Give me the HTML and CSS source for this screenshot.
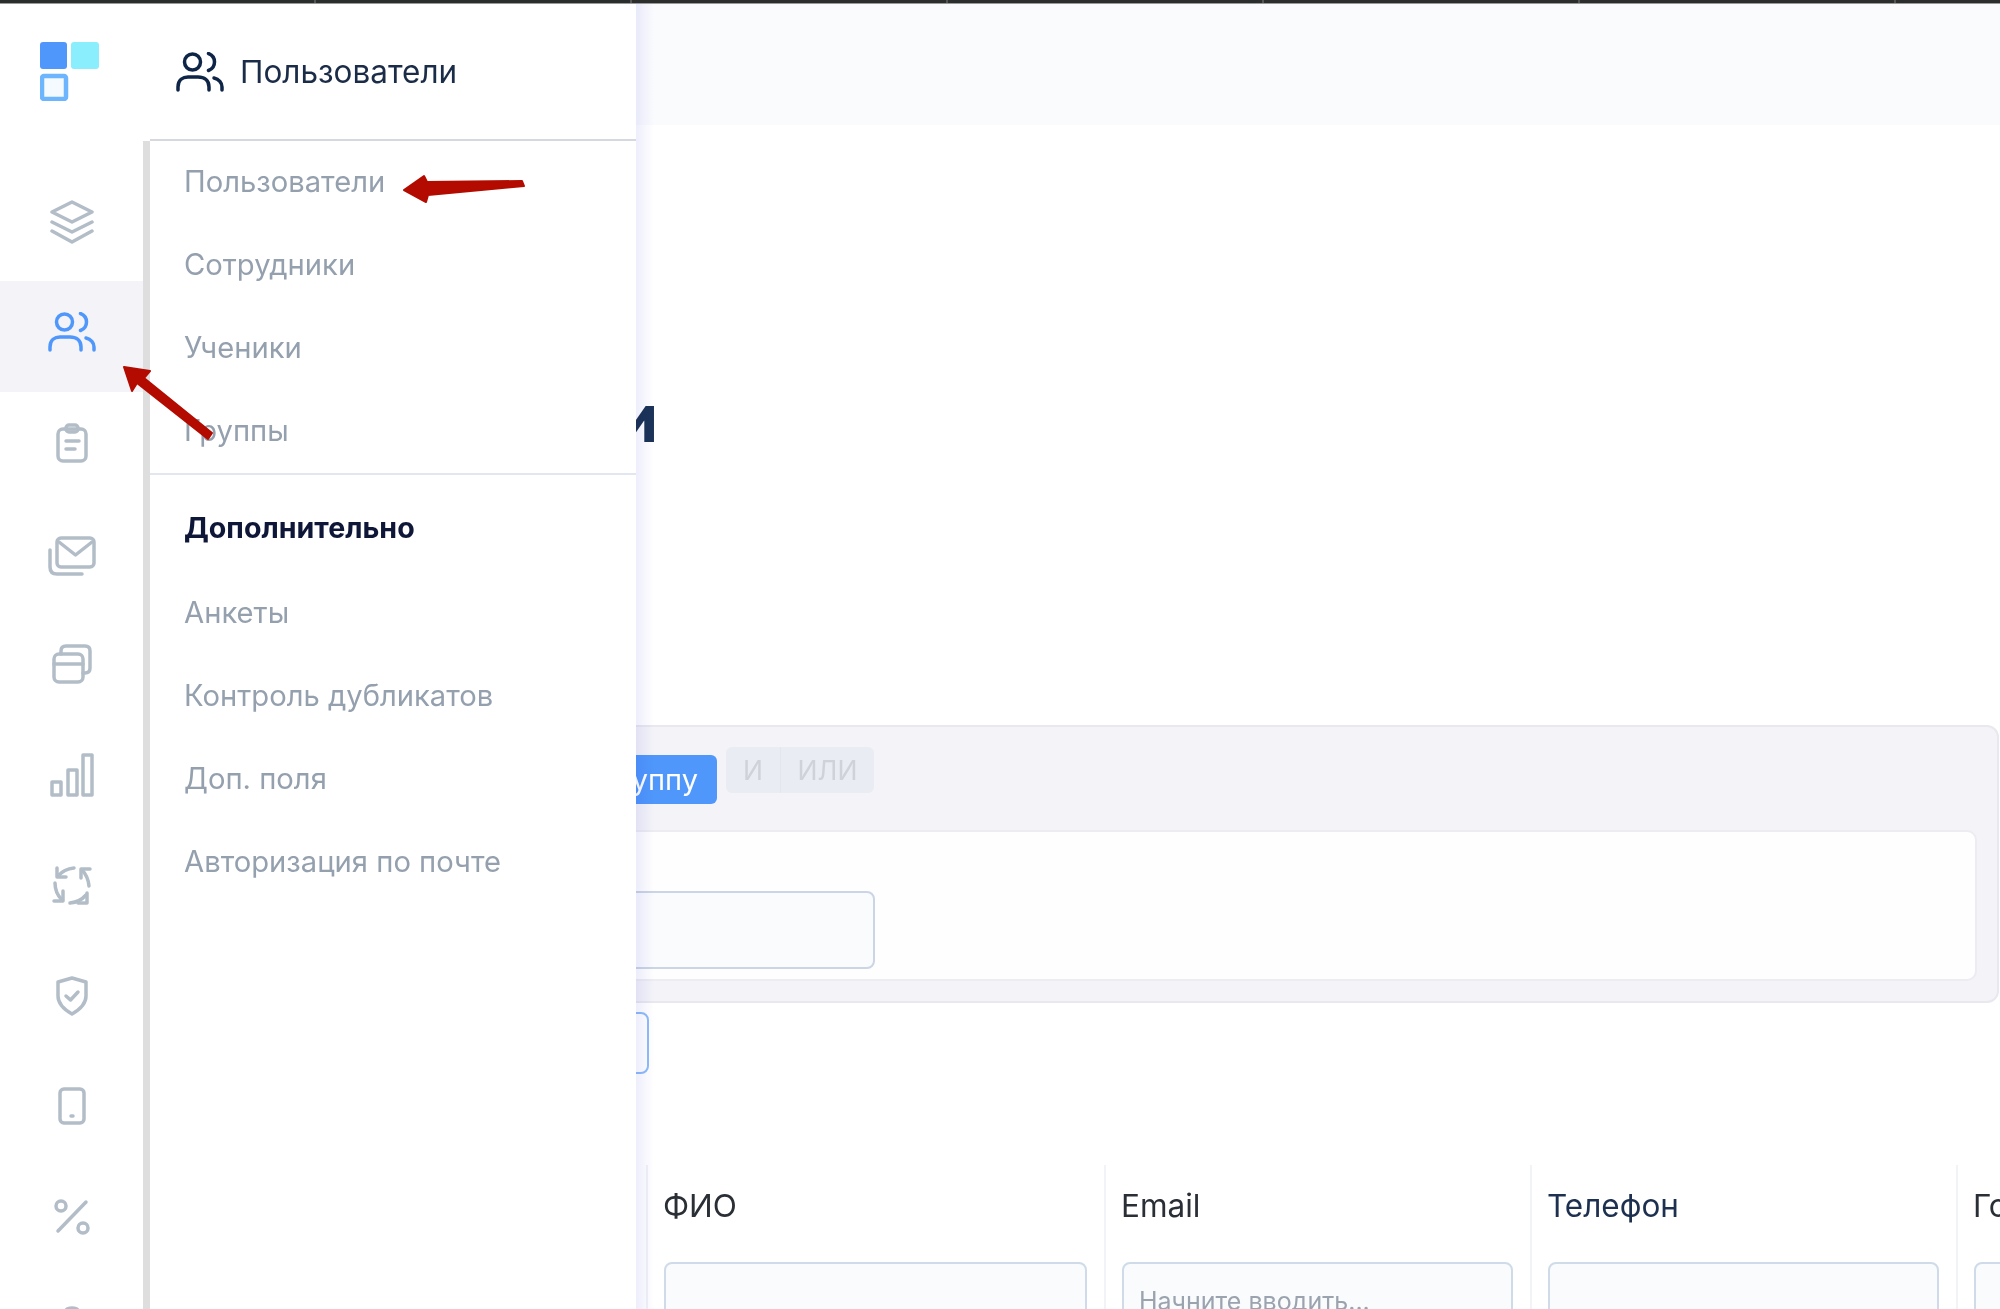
FILE: index.html
```html
<!DOCTYPE html>
<html lang="ru">
  <head>
    <meta charset="UTF-8" />
    <title>Пользователи</title>
    <link rel="stylesheet" href="styles.css">
  </head>
  <body>
    <div class="topBar"></div>
    <div class="app">
      <main class="main">
        <div class="pageBar"></div>
        <div class="content">
          <h1 class="pageTitle">Пользователи</h1>

          <section class="filterGroup">
            <div class="groupHead">
              <button class="addGroup">Добавить группу</button>
              <div class="logicSwitch">
                <span class="logicAnd">И</span>
                <span class="logicOr">ИЛИ</span>
              </div>
            </div>
            <div class="groupBody">
              <div class="conditionInput"></div>
            </div>
          </section>
          <div class="applyButton"></div>

          <div class="tableHead">
            <div class="headCell"></div>
            <div class="headCell">
              <div class="headLabel">ФИО</div>
              <input class="headInput" type="text" />
            </div>
            <div class="headCell">
              <div class="headLabel">Email</div>
              <input class="headInput" type="text" placeholder="Начните вводить..." />
            </div>
            <div class="headCell">
              <div class="headLabel headLabelBlue">Телефон</div>
              <input class="headInput" type="text" />
            </div>
            <div class="headCell">
              <div class="headLabel">Город</div>
              <input class="headInput" type="text" />
            </div>
          </div>
        </div>
      </main>

      <div class="side">
        <nav class="rail">
          <div class="railLogo">
            <svg width="59" height="59" viewBox="0 0 59 59">
              <rect x="0" y="0" width="27" height="27" rx="3" fill="#4f97fb" />
              <rect x="31" y="0" width="28" height="27" rx="3" fill="#8beefc" />
              <rect x="2" y="34" width="24" height="23" rx="2" fill="#f4faff" stroke="#6db5fc" stroke-width="4.5" />
            </svg>
          </div>
          <a class="railItem">
            <svg class="icon" width="44" height="44" viewBox="0 0 44 44"><path d="M22 2 L42 12 L22 22 L2 12 Z" /><path d="M2 22 L22 32 L42 22" /><path d="M2 31 L22 42 L42 31" /></svg>
          </a>
          <a class="railItem railItemActive">
            <svg class="icon" width="48" height="40" viewBox="0 0 48 40"><circle cx="16.5" cy="10" r="8" /><path d="M32.5 1.5 C36.5 3 38.5 6 38.5 10 C38.5 14 36.5 17 32.5 18.5" /><path d="M2 38 V35 C2 28 7 25 12 25 H22 C28 25 33 28 33 35 V38" /><path d="M38 26 C43 27 46 31 46 35 V38" /></svg>
          </a>
          <a class="railItem">
            <svg class="icon" width="32" height="40" viewBox="0 0 32 40"><rect x="2" y="6" width="28" height="32" rx="5" /><rect x="10" y="2" width="12" height="7" rx="3" /><path d="M10 18 H23" /><path d="M10 26 H19" /></svg>
          </a>
          <a class="railItem">
            <svg class="icon iconLow" width="48" height="40" viewBox="0 0 48 40"><rect x="9" y="2" width="37" height="29" rx="4" /><path d="M11 6 L27.500 19 L44 6" /><path d="M2 14 V31 Q2 38 9 38 H34" /></svg>
          </a>
          <a class="railItem">
            <svg class="icon" width="40" height="40" viewBox="0 0 40 40"><rect x="2" y="10" width="29" height="28" rx="5" /><path d="M2 20 H31" /><path d="M9 10 V7 Q9 2 14 2 H33 Q38 2 38 7 V24 Q38 29 33 29 H31" /></svg>
          </a>
          <a class="railItem">
            <svg class="icon" width="44" height="44" viewBox="0 0 44 44"><rect x="2" y="29" width="9" height="13" /><rect x="18" y="17" width="9" height="25" /><rect x="33" y="2" width="9" height="40" /></svg>
          </a>
          <a class="railItem">
            <svg class="icon" width="40" height="40" viewBox="0 0 40 40"><path d="M22 3 Q12 4 6 11" /><path d="M5 3 V12 H14" /><path d="M37 21 Q36 11 30 5" /><path d="M38 4 H29 V13" /><path d="M18 38 Q28 37 34 30" /><path d="M35 28 V38 H26" /><path d="M3 18 Q3 28 10 35" /><path d="M2 36 H11 V26" /></svg>
          </a>
          <a class="railItem">
            <svg class="icon" width="32" height="40" viewBox="0 0 32 40"><path d="M16 2 L30 6 V20 C30 29 23 34 16 38 C9 34 2 29 2 20 V6 Z" /><path d="M10 20 L14.500 24 L22 16" /></svg>
          </a>
          <a class="railItem">
            <svg class="icon" width="28" height="38" viewBox="0 0 28 38"><rect x="2" y="2" width="24" height="34" rx="4" /><path d="M13 29 H15" /></svg>
          </a>
          <a class="railItem">
            <svg class="icon" width="36" height="36" viewBox="0 0 36 36"><circle cx="7" cy="7" r="5" /><circle cx="29" cy="29" r="5" /><path d="M32 3 L4 32" /></svg>
          </a>
          <a class="railItem">
            <svg class="icon" width="44" height="44" viewBox="0 0 44 44"><path d="M15 8 Q15 2 22 2 Q29 2 29 8" /><path d="M5 9 L10 8" /><path d="M34 8 L39 9" /><circle cx="22" cy="22" r="7" /></svg>
          </a>
        </nav>

        <aside class="flyout">
          <div class="flyoutHead">
            <svg class="flyoutIcon" width="48" height="40" viewBox="0 0 48 40"><circle cx="16.5" cy="10" r="8" /><path d="M32.5 1.5 C36.5 3 38.5 6 38.5 10 C38.5 14 36.5 17 32.5 18.5" /><path d="M2 38 V35 C2 28 7 25 12 25 H22 C28 25 33 28 33 35 V38" /><path d="M38 26 C43 27 46 31 46 35 V38" /></svg>
            <span class="flyoutTitle">Пользователи</span>
          </div>
          <div class="flyoutBody">
            <div class="menuGroup">
              <a class="menuItem">Пользователи</a>
              <a class="menuItem">Сотрудники</a>
              <a class="menuItem">Ученики</a>
              <a class="menuItem">Группы</a>
            </div>
            <div class="menuGroup">
              <div class="menuHeading">Дополнительно</div>
              <a class="menuItem">Анкеты</a>
              <a class="menuItem">Контроль дубликатов</a>
              <a class="menuItem">Доп. поля</a>
              <a class="menuItem">Авторизация по почте</a>
            </div>
          </div>
        </aside>
      </div>

      <!-- red arrows drawn over the screen -->
      <svg class="marks" width="560" height="460" viewBox="0 4 560 460">
        <path d="M404 190 L424 176 L427 182 L522 181 L524 186 L428 195 L426 202 Z" />
        <path d="M124 367 L150 371 L144 378 L212 433 L208 439 L137 383 L132 391 Z" />
      </svg>
    </div>
  </body>
</html>
```

FILE: styles.css
```css
html,
body {
  height: 100%;
}

body {
  margin: 0;
  display: flex;
  flex-direction: column;
  overflow: hidden;
  background-color: #fff;
  color: #20304a;
  font-family: Inter, 'Noto Sans', sans-serif;
}

.topBar {
  height: 4px;
  flex-shrink: 0;
  background: repeating-linear-gradient(90deg, #2a2e2d 0, #2a2e2d 314px, #555 314px, #555 316px);
  border-bottom: 1px solid #9a9a9a;
  box-sizing: border-box;
}

.app {
  position: relative;
  flex: 1;
  overflow: hidden;
  filter: blur(0.7px);
}

/* main page, mostly covered by the side menu */
.pageBar {
  height: 121px;
  background-color: #fafbfd;
}

.content {
  padding: 0 1px 0 172px;
}

.pageTitle {
  margin: 253px 0 0 14px;
  font-size: 66px;
  font-weight: 700;
  line-height: 80px;
  color: #1b3358;
}

.filterGroup {
  margin-top: 267px;
  padding: 20px;
  background-color: #f3f3f8;
  border: 2px solid #e8e8ef;
  border-radius: 12px;
}

.groupHead {
  display: flex;
  align-items: flex-start;
  gap: 9px;
}

.addGroup {
  width: 281px;
  height: 49px;
  margin: 8px 0 0 242px;
  padding: 0 19px 0 0;
  border: none;
  border-radius: 6px;
  background-color: #4f97fb;
  color: #fff;
  font-family: inherit;
  font-size: 29px;
  text-align: right;
}

.logicSwitch {
  display: flex;
  height: 46px;
  border-radius: 6px;
  background-color: #e9ecf3;
  color: #cfd2d9;
  font-size: 26.5px;
  line-height: 46px;
  text-align: center;
}

.logicAnd {
  width: 54px;
  border-right: 1px solid #e3e6ee;
}

.logicOr {
  width: 93px;
}

.groupBody {
  height: 151px;
  margin-top: 26px;
  padding: 59px 0 0 79px;
  box-sizing: border-box;
  background-color: #fefefe;
  border: 2px solid #ececf2;
  border-radius: 10px;
}

.conditionInput {
  width: 600px;
  height: 78px;
  box-sizing: border-box;
  background-color: #fafbfd;
  border: 2px solid #cbd5e5;
  border-radius: 8px;
}

.applyButton {
  width: 477px;
  height: 62px;
  margin-top: 9px;
  box-sizing: border-box;
  background-color: #fff;
  border: 2px solid #8fbcf9;
  border-radius: 8px;
}

.tableHead {
  display: grid;
  grid-template-columns: 474px 458px 426px 426px 1fr;
  margin-top: 91px;
}

.headCell {
  padding: 24px 17px 0 16px;
  border-left: 2px solid #f1f3f7;
}

.headCell:first-child {
  border-left: none;
}

.headLabel {
  margin: 0 0 39px -1px;
  font-size: 31.5px;
  line-height: 34px;
  color: #2a2f36;
}

.headLabelBlue {
  color: #1e3050;
}

.headInput {
  display: block;
  width: 100%;
  height: 78px;
  padding: 0 15px;
  box-sizing: border-box;
  background-color: #fafbfd;
  border: 2px solid #cfdbe9;
  border-radius: 8px;
  font-family: inherit;
  font-size: 25px;
}

.headInput::placeholder {
  color: #9aa3ae;
}

/* side menu lies over the page */
.side {
  position: absolute;
  top: 0;
  bottom: 0;
  left: 0;
  display: flex;
}

.rail {
  width: 143px;
  background-color: #fff;
}

.railLogo {
  height: 166.4px;
  box-sizing: border-box;
  padding: 38px 0 0 40px;
}

.railItem {
  display: flex;
  align-items: center;
  justify-content: center;
  height: 110.6px;
  box-sizing: border-box;
  padding: 0 0 8px 0;
  color: #b2bdc8;
}

.railItemActive {
  background-color: #f3f3f8;
  color: #4f97fb;
}

.icon {
  fill: none;
  stroke: currentColor;
  stroke-width: 3.5;
  stroke-linecap: round;
  stroke-linejoin: round;
}

.iconLow {
  margin-top: 5px;
}

.flyout {
  position: relative;
  display: flex;
  flex-direction: column;
  width: 493px;
  background-color: #fff;
}

/* soft shadow on the right edge of the menu */
.flyout::after {
  content: '';
  position: absolute;
  top: 0;
  bottom: 0;
  left: 100%;
  width: 18px;
  background: linear-gradient(90deg, #eeeefc, #fff);
  mix-blend-mode: multiply;
}

.flyoutHead {
  display: flex;
  align-items: center;
  gap: 16px;
  height: 135px;
  margin-left: 7px;
  padding-left: 26px;
  border-bottom: 2px solid #d5d8de;
  flex-shrink: 0;
}

.flyoutIcon {
  fill: none;
  stroke: #0f2547;
  stroke-width: 3.5;
  stroke-linecap: round;
  stroke-linejoin: round;
}

.flyoutTitle {
  font-size: 31.5px;
  color: #1b2c48;
}

.flyoutBody {
  flex: 1;
  border-left: 7px solid #dedede;
}

.menuGroup + .menuGroup {
  border-top: 2px solid #e2e6f0;
}

.menuItem {
  display: block;
  padding: 23.5px 0 25.5px 34px;
  font-size: 29.2px;
  line-height: 34px;
  color: #94a0ae;
}

.menuHeading {
  padding: 36px 0 27px 34px;
  font-size: 28.6px;
  font-weight: 700;
  line-height: 34px;
  color: #0f1738;
}

.marks {
  position: absolute;
  top: 0;
  left: 0;
  fill: #b30b00;
  stroke: #b30b00;
  stroke-width: 2;
  stroke-linejoin: round;
}
```
